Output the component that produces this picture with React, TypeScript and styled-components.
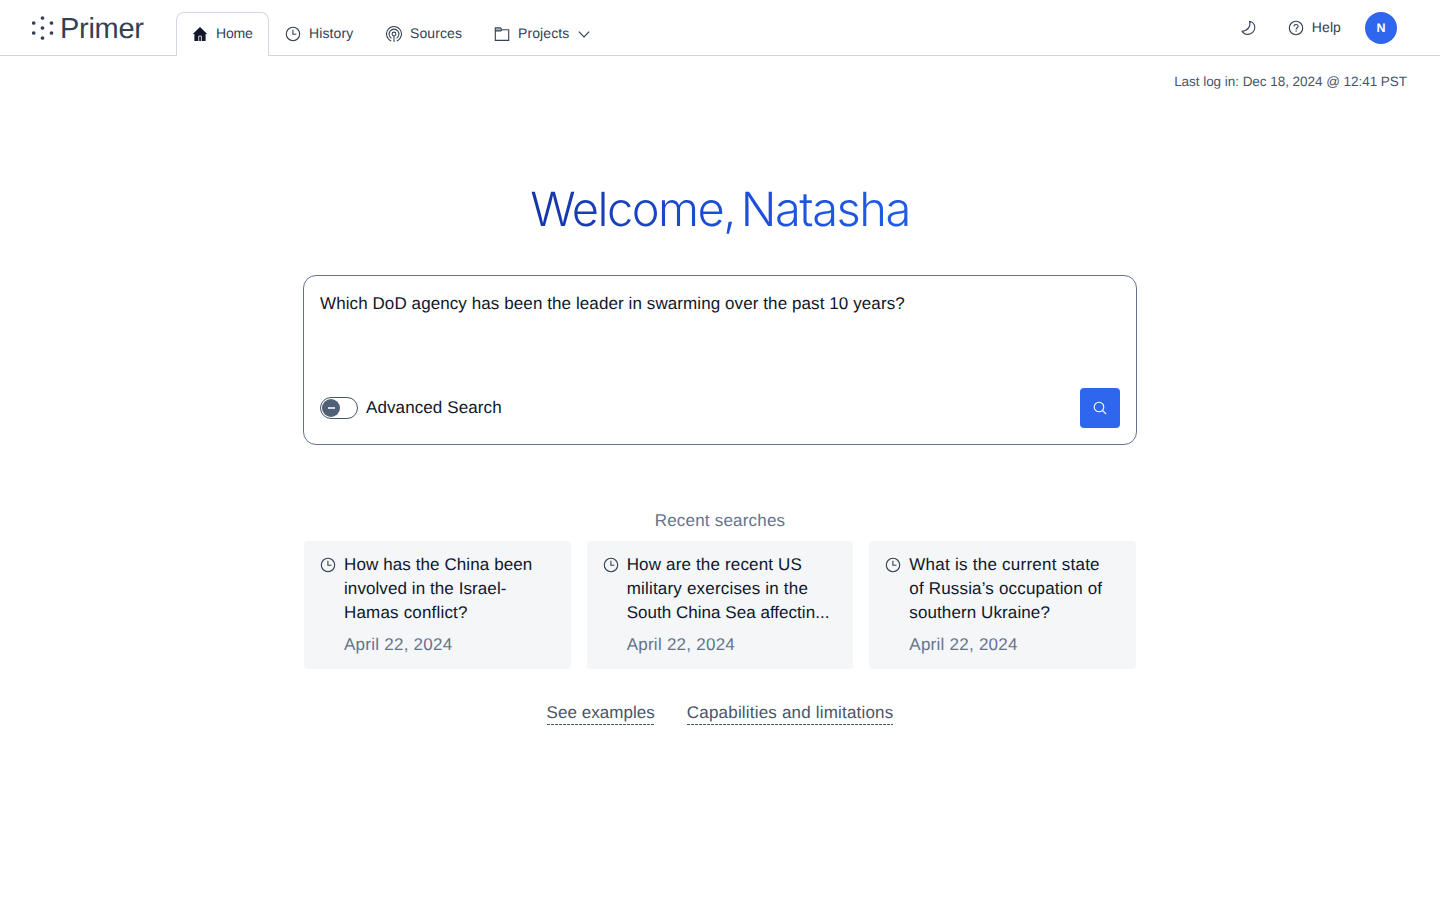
import React from "react";
import styled, { createGlobalStyle } from "styled-components";

const Global = createGlobalStyle`
  *, *::before, *::after { box-sizing: border-box; }
  body { margin: 0; background: #fff; text-rendering: geometricPrecision; }
`;

const Page = styled.div`
  height: 920px;
  display: flex;
  flex-direction: column;
  background: #fff;
  color: #0f172a;
  font-family: "Liberation Sans", Arial, sans-serif;
  overflow: hidden;
`;

const Header = styled.header`
  height: 56px;
  flex: none;
  display: flex;
  align-items: stretch;
  padding: 0 43px 0 31px;
  border-bottom: 1px solid #d3d5da;
`;

const Brand = styled.div`
  display: flex;
  align-items: center;
  width: 145px;
  color: #334155;
`;

const BrandName = styled.span`
  margin-left: 5px;
  padding-top: 2px;
  font-size: 29px;
  line-height: 32px;
  letter-spacing: -0.3px;
`;

const Nav = styled.nav`
  display: flex;
  flex: 1;
  align-items: flex-end;
`;

const Tab = styled.a<{ $active?: boolean; $width: number }>`
  display: flex;
  align-items: center;
  gap: 8px;
  width: ${(p) => p.$width}px;
  height: 44px;
  margin-bottom: -1px;
  padding: 0 0 2px 15px;
  font-size: 14px;
  letter-spacing: ${(p) => (p.$active ? -0.2 : 0.1)}px;
  white-space: nowrap;
  color: #334155;
  border: 1px solid ${(p) => (p.$active ? "#d3d9e2" : "transparent")};
  border-bottom: 0;
  border-radius: 8px 8px 0 0;
  background: ${(p) => (p.$active ? "#fff" : "transparent")};
`;

const Label = styled.span`
  padding-bottom: 2px;
`;

const Actions = styled.div`
  display: flex;
  align-items: center;
  color: #334155;
`;

const Help = styled.div`
  display: flex;
  align-items: center;
  gap: 8px;
  margin: 0 24px 0 32px;
  font-size: 14px;
  letter-spacing: 0.1px;
`;

const Avatar = styled.div`
  width: 32px;
  height: 32px;
  display: grid;
  place-items: center;
  border-radius: 50%;
  background: #2f66ee;
  color: #fff;
  font-size: 12.5px;
  font-weight: 700;
`;

const LastLogin = styled.div`
  align-self: flex-end;
  margin: 17px 33px 0 0;
  font-size: 13.5px;
  line-height: 18px;
  letter-spacing: -0.04px;
  color: #475569;
`;

const Main = styled.main`
  width: 834px;
  margin: 0 auto;
  display: flex;
  flex-direction: column;
  align-items: center;
`;

const Title = styled.h1`
  margin: 89px 0 0;
  font-family: Inter, "Liberation Sans", sans-serif;
  font-size: 47px;
  font-weight: 300;
  line-height: 60px;
  letter-spacing: -1.5px;
  word-spacing: -6px;
  white-space: nowrap;
  color: transparent;
  background: linear-gradient(100deg, #1434a4 0%, #1d4ed8 50%, #205be6 100%);
  background-clip: text;
  -webkit-background-clip: text;
`;

const SearchBox = styled.section`
  width: 100%;
  height: 170px;
  margin-top: 35px;
  padding: 16px;
  display: flex;
  flex-direction: column;
  justify-content: space-between;
  border: 1px solid #64748b;
  border-radius: 13px;
`;

const Query = styled.div`
  font-size: 17px;
  line-height: 24px;
  letter-spacing: 0.09px;
`;

const SearchFooter = styled.div`
  display: flex;
  align-items: center;
  justify-content: space-between;
`;

const ToggleLabel = styled.label`
  display: flex;
  align-items: center;
  gap: 8px;
  font-size: 17px;
  letter-spacing: 0.1px;
`;

const Toggle = styled.span`
  width: 38px;
  height: 22px;
  padding: 1px;
  display: flex;
  border: 1px solid #475569;
  border-radius: 11px;
`;

const Knob = styled.span`
  width: 18px;
  height: 18px;
  display: grid;
  place-items: center;
  border-radius: 50%;
  background: #526075;
`;

const Dash = styled.span`
  width: 7px;
  height: 1.5px;
  background: #d5d9df;
`;

const SearchButton = styled.button`
  width: 40px;
  height: 40px;
  padding: 0;
  display: grid;
  place-items: center;
  border: 0;
  border-radius: 4px;
  background: #2f66ee;
  color: #fff;
`;

const SectionLabel = styled.h2`
  margin: 64px 0 8px;
  font-size: 17px;
  font-weight: 400;
  line-height: 24px;
  letter-spacing: 0.2px;
  color: #64748b;
`;

const Cards = styled.div`
  width: 832px;
  display: grid;
  grid-template-columns: repeat(3, 1fr);
  gap: 16px;
`;

const Card = styled.article`
  height: 128px;
  padding: 12px 16px;
  display: flex;
  gap: 8px;
  border-radius: 4px;
  background: #f4f6f8;
  font-size: 17px;
  line-height: 24px;
  white-space: nowrap;
`;

const CardIcon = styled.span`
  height: 24px;
  display: flex;
  align-items: center;
  color: #334155;
`;

const CardLine = styled.div<{ $tracking: number }>`
  letter-spacing: ${(p) => p.$tracking}px;
`;

const CardDate = styled.div`
  margin-top: 8px;
  letter-spacing: 0.25px;
  color: #64748b;
`;

const Links = styled.div`
  display: flex;
  gap: 32px;
  margin-top: 32px;
`;

const DashedLink = styled.a<{ $tracking: number }>`
  height: 24px;
  font-size: 17px;
  line-height: 24px;
  letter-spacing: ${(p) => p.$tracking}px;
  color: #475569;
  background: repeating-linear-gradient(90deg, #475569 0 3px, transparent 3px 4px) bottom / 100% 1px no-repeat;
`;

const Stroke = ({ children }: { children: React.ReactNode }) => (
  <svg width="16" height="16" viewBox="0 0 16 16" fill="none" stroke="currentColor" strokeWidth="1.1">
    {children}
  </svg>
);

const ClockIcon = () => (
  <Stroke>
    <circle cx="8" cy="8" r="6.7" />
    <path d="M7.9 3.8v4.5h3.5" />
  </Stroke>
);

const HomeIcon = () => (
  <svg width="16" height="16" viewBox="0 0 16 16" fill="#0f172a">
    <path d="M8 1 15.2 7.9h-1.6V15H2.4V7.9H.8z" />
    <path d="M6.7 15v-4.9h2.7V15" fill="none" stroke="#fff" strokeWidth=".8" />
  </svg>
);

const SourcesIcon = () => (
  <svg width="16" height="16" viewBox="0 0 16 16" fill="none" stroke="currentColor" strokeWidth="1.05">
    <path d="M5.2 14.9a7.45 7.45 0 1 1 5.6 0" />
    <path d="M5.4 12.2a4.9 4.9 0 1 1 5.2 0" />
    <circle cx="8" cy="8" r="1.9" />
    <path d="M8 9.9V16" />
  </svg>
);

const FolderIcon = () => (
  <Stroke>
    <path d="M1.3 4.6V1.9h4.9l1.5 1.7-1 1z" fill="#a3adba" stroke="none" />
    <path d="M1.3 14.4V1.8h5.2l1.5 2h6.7v10.6zM1.3 4.9h5.4l1.3-1.1" />
  </Stroke>
);

const Chevron = styled.svg`
  margin-left: 1px;
`;

const ChevronIcon = () => (
  <Chevron width="12" height="8" viewBox="0 0 12 8" fill="none" stroke="currentColor" strokeWidth="1.2">
    <path d="M.8 1.7 6 7l5.200-5.300" />
  </Chevron>
);

const MoonIcon = () => (
  <Stroke>
    <path strokeLinejoin="round" d="M9.600 1.300c1.400 5-1.600 9.400-7.600 10 1.300 2.200 3.600 3.300 6 3.100 4-.3 6.800-3.400 6.800-6.900 0-3-2-5.400-5.200-6.200z" />
  </Stroke>
);

const HelpIcon = () => (
  <Stroke>
    <circle cx="8" cy="8" r="6.7" />
    <path d="M6 6.500c0-2.700 4.100-2.600 4.100-.2 0 1.500-2 1.500-2 3.200M8.100 10.600v1.200" />
  </Stroke>
);

const logoDots = [
  [11.5, 3],
  [2.7, 8],
  [20.5, 8],
  [11.5, 13],
  [2.7, 18],
  [20.5, 18],
  [11.5, 23],
];

const LogoMark = () => (
  <svg width="24" height="26" viewBox="0 0 24 26" fill="#334155">
    {logoDots.map(([x, y]) => (
      <circle key={`${x}-${y}`} cx={x} cy={y} r="1.85" />
    ))}
  </svg>
);

const searches = [
  { lines: ["How has the China been", "involved in the Israel-", "Hamas conflict?"], tracking: [0.1, 0.08, 0.18] },
  { lines: ["How are the recent US", "military exercises in the", "South China Sea affectin..."], tracking: [0.16, 0.19, 0.03] },
  { lines: ["What is the current state", "of Russia’s occupation of", "southern Ukraine?"], tracking: [0.25, 0.17, 0.1] },
];

export default function App() {
  return (
    <Page>
      <Global />
      <Header>
        <Brand>
          <LogoMark />
          <BrandName>Primer</BrandName>
        </Brand>
        <Nav>
          <Tab $active $width={93}><HomeIcon /><Label>Home</Label></Tab>
          <Tab $width={101}><ClockIcon /><Label>History</Label></Tab>
          <Tab $width={108}><SourcesIcon /><Label>Sources</Label></Tab>
          <Tab $width={130}><FolderIcon /><Label>Projects</Label><ChevronIcon /></Tab>
        </Nav>
        <Actions>
          <MoonIcon />
          <Help><HelpIcon /><Label>Help</Label></Help>
          <Avatar>N</Avatar>
        </Actions>
      </Header>
      <LastLogin>Last log in: Dec 18, 2024 @ 12:41 PST</LastLogin>
      <Main>
        <Title>Welcome, Natasha</Title>
        <SearchBox>
          <Query>Which DoD agency has been the leader in swarming over the past 10 years?</Query>
          <SearchFooter>
            <ToggleLabel>
              <Toggle><Knob><Dash /></Knob></Toggle>
              Advanced Search
            </ToggleLabel>
            <SearchButton aria-label="Search">
              <Stroke>
                <circle cx="7" cy="7" r="4.8" />
                <path d="m10.5 10.5 3.7 3.7" />
              </Stroke>
            </SearchButton>
          </SearchFooter>
        </SearchBox>
        <SectionLabel>Recent searches</SectionLabel>
        <Cards>
          {searches.map(({ lines, tracking }) => (
            <Card key={lines[0]}>
              <CardIcon><ClockIcon /></CardIcon>
              <div>
                {lines.map((line, i) => (
                  <CardLine key={line} $tracking={tracking[i]}>{line}</CardLine>
                ))}
                <CardDate>April 22, 2024</CardDate>
              </div>
            </Card>
          ))}
        </Cards>
        <Links>
          <DashedLink $tracking={0.05}>See examples</DashedLink>
          <DashedLink $tracking={0.19}>Capabilities and limitations</DashedLink>
        </Links>
      </Main>
    </Page>
  );
}
